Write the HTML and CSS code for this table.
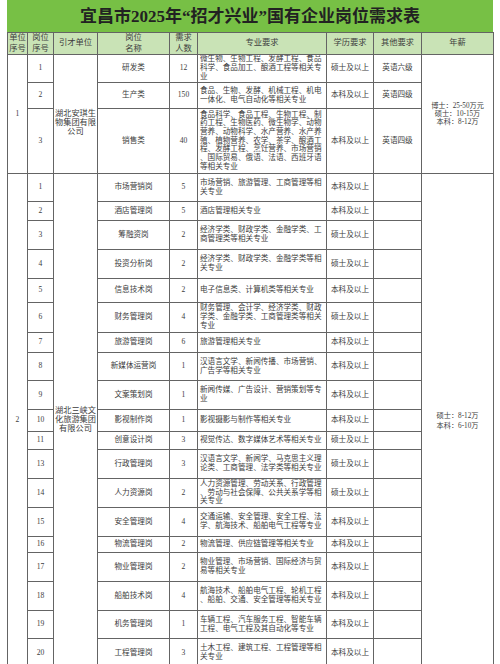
FILE: index.html
```html
<!DOCTYPE html>
<html lang="zh-CN">
<head>
<meta charset="utf-8">
<title>宜昌市2025年“招才兴业”国有企业岗位需求表</title>
<link rel="stylesheet" href="styles.css">
</head>
<body>
<div class="sheet">
  <div class="title">宜昌市2025年“招才兴业”国有企业岗位需求表</div>
  <table class="grid">
    <colgroup>
      <col class="c-unit"><col class="c-seq"><col class="c-org"><col class="c-name"><col class="c-cnt"><col class="c-spec"><col class="c-edu"><col class="c-other"><col class="c-pay">
    </colgroup>
    <thead>
      <tr class="hd">
        <th>单位<br>序号</th><th>岗位<br>序号</th><th>引才单位</th><th>岗位<br>名称</th><th>需求<br>人数</th><th>专业要求</th><th>学历要求</th><th>其他要求</th><th>年薪</th>
      </tr>
    </thead>
    <tbody>
      <tr class="h28">
        <td rowspan="3">1</td><td>1</td>
        <td rowspan="3" class="org org-low">湖北安琪生<br>物集团有限<br>公司</td>
        <td>研发类</td><td>12</td>
        <td class="spec">微生物、生物工程、发酵工程、食品<br>科学、食品加工、酿酒工程等相关专<br>业</td>
        <td>硕士及以上</td><td>英语六级</td>
        <td rowspan="3" class="pay">博士：25-50万元<br>硕士：10-15万<br>本科：8-12万</td>
      </tr>
      <tr class="h26">
        <td>2</td><td>生产类</td><td>150</td>
        <td class="spec">食品、生物、发酵、机械工程、机电<br>一体化、电气自动化等相关专业</td>
        <td>本科及以上</td><td>英语四级</td>
      </tr>
      <tr class="h65">
        <td>3</td><td>销售类</td><td>40</td>
        <td class="spec">食品科学、食品工程、生物工程、制<br>药工程、生物医药、微生物学、动物<br>营养、动物科学、水产营养、水产养<br>殖、植物营养、农学、茶学、酿酒工<br>程、发酵工程、烹饪营养、市场营销<br>、国际贸易、俄语、法语、西班牙语<br>等相关专业</td>
        <td>本科及以上</td><td>英语四级</td>
      </tr>

      <tr class="h28 sec">
        <td rowspan="19">2</td><td>1</td>
        <td rowspan="19" class="org">湖北三峡文<br>化旅游集团<br>有限公司</td>
        <td>市场营销岗</td><td>5</td>
        <td class="spec">市场营销、旅游管理、工商管理等相<br>关专业</td>
        <td>本科及以上</td><td></td>
        <td rowspan="19" class="pay pay2">硕士：8-12万<br>本科：6-10万</td>
      </tr>
      <tr class="h19"><td>2</td><td>酒店管理岗</td><td>5</td><td class="spec">酒店管理相关专业</td><td>本科及以上</td><td></td></tr>
      <tr class="h29"><td>3</td><td>筹融资岗</td><td>2</td><td class="spec">经济学类、财政学类、金融学类、工<br>商管理类等相关专业</td><td>硕士及以上</td><td></td></tr>
      <tr class="h29"><td>4</td><td>投资分析岗</td><td>2</td><td class="spec">经济学类、财政学类、金融学类等相<br>关专业</td><td>硕士及以上</td><td></td></tr>
      <tr class="h24"><td>5</td><td>信息技术岗</td><td>2</td><td class="spec">电子信息类、计算机类等相关专业</td><td>本科及以上</td><td></td></tr>
      <tr class="h30"><td>6</td><td>财务管理岗</td><td>4</td><td class="spec">财务管理、会计学、经济学类、财政<br>学类、金融学类、工商管理类等相关<br>专业</td><td>硕士及以上</td><td></td></tr>
      <tr class="h20"><td>7</td><td>旅游管理岗</td><td>6</td><td class="spec">旅游管理相关专业</td><td>本科及以上</td><td></td></tr>
      <tr class="h28"><td>8</td><td>新媒体运营岗</td><td>1</td><td class="spec">汉语言文学、新闻传播、市场营销、<br>广告学等相关专业</td><td>本科及以上</td><td></td></tr>
      <tr class="h29"><td>9</td><td>文案策划岗</td><td>1</td><td class="spec">新闻传媒、广告设计、营销策划等专<br>业</td><td>本科及以上</td><td></td></tr>
      <tr class="h22"><td>10</td><td>影视制作岗</td><td>1</td><td class="spec">影视摄影与制作等相关专业</td><td>本科及以上</td><td></td></tr>
      <tr class="h18"><td>11</td><td>创意设计岗</td><td>3</td><td class="spec">视觉传达、数字媒体艺术等相关专业</td><td>硕士及以上</td><td></td></tr>
      <tr class="h29"><td>13</td><td>行政管理岗</td><td>3</td><td class="spec">汉语言文学、新闻学、马克思主义理<br>论类、工商管理、法学类等相关专业</td><td>硕士及以上</td><td></td></tr>
      <tr class="h29"><td>14</td><td>人力资源岗</td><td>2</td><td class="spec">人力资源管理、劳动关系、行政管理<br>、劳动与社会保障、公共关系学等相<br>关专业</td><td>硕士及以上</td><td></td></tr>
      <tr class="h29"><td>15</td><td>安全管理岗</td><td>4</td><td class="spec">交通运输、安全管理、安全工程、法<br>学、航海技术、船舶电气工程等专业</td><td>本科及以上</td><td></td></tr>
      <tr class="h16"><td>16</td><td>物流管理岗</td><td>2</td><td class="spec">物流管理、供应链管理等相关专业</td><td>本科及以上</td><td></td></tr>
      <tr class="h29"><td>17</td><td>物业管理岗</td><td>2</td><td class="spec">物业管理、市场营销、国际经济与贸<br>易等相关专业</td><td>本科及以上</td><td></td></tr>
      <tr class="h29"><td>18</td><td>船舶技术岗</td><td>4</td><td class="spec">航海技术、船舶电气工程、轮机工程<br>、船舶、交通、安全管理等相关专业</td><td>本科及以上</td><td></td></tr>
      <tr class="h28"><td>19</td><td>机务管理岗</td><td>1</td><td class="spec">车辆工程、汽车服务工程、智能车辆<br>工程、电气工程及其自动化等专业</td><td>本科及以上</td><td></td></tr>
      <tr class="h29"><td>20</td><td>工程管理岗</td><td>3</td><td class="spec">土木工程、建筑工程、工程管理等相<br>关专业</td><td>本科及以上</td><td></td></tr>
    </tbody>
  </table>
</div>
</body>
</html>
```

FILE: styles.css
```css
html, body {
  margin: 0;
  padding: 0;
  background: #ffffff;
}

.sheet {
  width: 486px;
  margin-left: 7px;
}

.title {
  height: 32px;
  background: #77c045;
  color: #222222;
  font-family: "Liberation Serif", "Noto Sans CJK SC", serif;
  font-weight: 600;
  font-size: 17px;
  line-height: 33px;
  text-align: center;
  white-space: nowrap;
}

.grid {
  width: 486px;
  border-collapse: collapse;
  table-layout: fixed;
  font-family: "Liberation Serif", "Noto Sans CJK SC", serif;
  font-size: 7.6px;
  line-height: 8.7px;
  color: #3c3c3c;
}

.c-unit { width: 20px; }
.c-seq { width: 26px; }
.c-org { width: 44px; }
.c-name { width: 72px; }
.c-cnt { width: 28px; }
.c-spec { width: 129px; }
.c-edu { width: 47px; }
.c-other { width: 48px; }
.c-pay { width: 72px; }

.grid th,
.grid td {
  border: 1px solid #646464;
  padding: 0 1px;
  text-align: center;
  vertical-align: middle;
  white-space: nowrap;
  overflow: hidden;
}

.grid th {
  background: #c9e3b6;
  font-weight: normal;
  font-size: 8.3px;
  line-height: 10.5px;
  color: #404040;
}

.hd { height: 21px; }

.grid td.spec {
  text-align: left;
  padding-left: 2px;
}

.grid td.org {
  font-size: 8.2px;
  line-height: 8.8px;
}

.grid td.org-low {
  padding-top: 19px;
}

.grid td.pay {
  font-size: 7.2px;
  line-height: 8px;
}

.grid td.pay2 {
  line-height: 10px;
}

.h16 { height: 16px; }
.h18 { height: 18px; }
.h19 { height: 19px; }
.h20 { height: 20px; }
.h22 { height: 22px; }
.h24 { height: 24px; }
.h26 { height: 26px; }
.h28 { height: 28px; }
.h29 { height: 29px; }
.h30 { height: 30px; }
.h65 { height: 65px; }
```
